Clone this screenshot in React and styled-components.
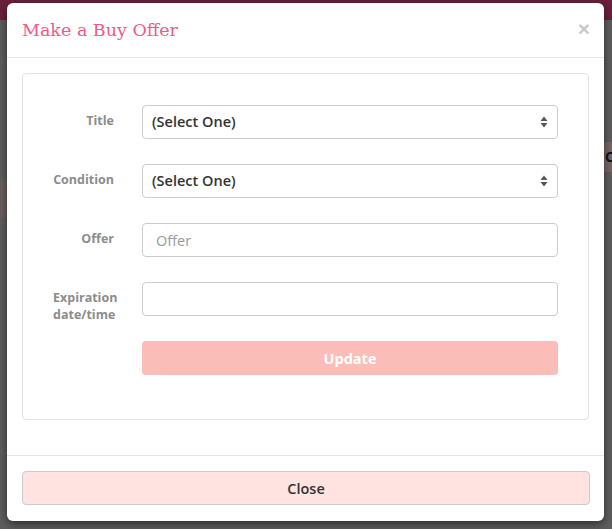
import React from 'react'
import styled, { createGlobalStyle } from 'styled-components'

const GlobalStyle = createGlobalStyle`
  html, body {
    margin: 0;
    padding: 0;
    background: #5d5d5d;
    font-family: 'Open Sans', 'Noto Sans', sans-serif;
  }
  * { box-sizing: border-box; }
`

const Arrows = () => (
  <svg width="8" height="12" viewBox="0 0 8 12">
    <path d="M4 0.5 L7.5 5 L0.5 5 Z" fill="#555" />
    <path d="M4 11.5 L7.5 7 L0.5 7 Z" fill="#555" />
  </svg>
)

const App = () => {
  const i18n = {
    title: 'Make a Buy Offer',
    update: 'Update',
    close: 'Close',
  }
  const fields = [
    { label: 'Title', type: 'select', value: '(Select One)' },
    { label: 'Condition', type: 'select', value: '(Select One)' },
    { label: 'Offer', type: 'input', placeholder: 'Offer' },
    { label: 'Expiration date/time', type: 'input', placeholder: '' },
  ]

  return (
    <Page>
      <GlobalStyle />
      <NavBar>
        <NavItem>▮ Home</NavItem>
        <NavItem>▭ Textbooks</NavItem>
      </NavBar>
      <Band $gap={122} $height={30} $left={590} $color="#776464">Co</Band>
      <Band $gap={8} $height={38} $left={0} $width="20px" $color="#6a5d5b" />

      <Modal>
        <Header>
          <Title>{i18n.title}</Title>
          <CloseX>×</CloseX>
        </Header>
        <Body>
          <Well>
            <Form>
              {fields.map((f) => (
                <React.Fragment key={f.label}>
                  <Label>{f.label}</Label>
                  {f.type === 'select' ? (
                    <SelectBox>
                      <span>{f.value}</span>
                      <Arrows />
                    </SelectBox>
                  ) : (
                    <Input placeholder={f.placeholder} />
                  )}
                </React.Fragment>
              ))}
              <span />
              <UpdateButton>{i18n.update}</UpdateButton>
            </Form>
          </Well>
        </Body>
        <Footer>
          <CloseButton>{i18n.close}</CloseButton>
        </Footer>
      </Modal>
    </Page>
  )
}

const Page = styled.div`
  position: relative;
  width: 612px;
  height: 529px;
  overflow: hidden;
  background: #5d5d5d;
`
const NavBar = styled.div`
  height: 20px;
  background: #6a1f3b;
  display: flex;
  justify-content: flex-end;
  align-items: flex-end;
  gap: 56px;
  padding-right: 42px;
  overflow: hidden;
`
const NavItem = styled.div`
  color: #8f7f86;
  font-size: 18px;
  line-height: 18px;
  margin-bottom: -14px;
`
const Band = styled.div`
  margin-top: ${(p) => p.$gap}px;
  margin-left: ${(p) => p.$left}px;
  width: ${(p) => p.$width || 'auto'};
  height: ${(p) => p.$height}px;
  background: ${(p) => p.$color};
  color: #111;
  font-weight: 700;
  font-size: 14px;
  line-height: ${(p) => p.$height}px;
  padding-left: 15px;
  white-space: nowrap;
  overflow: hidden;
`
const Modal = styled.div`
  position: absolute;
  left: 7px;
  top: 3px;
  width: 597px;
  height: 518px;
  background: #fff;
  border-radius: 6px;
  box-shadow: 0 3px 9px rgba(0, 0, 0, 0.5);
  display: flex;
  flex-direction: column;
`
const Header = styled.div`
  height: 55px;
  border-bottom: 1px solid #e5e5e5;
  display: flex;
  align-items: center;
  justify-content: space-between;
  padding: 0 14px 0 15px;
`
const Title = styled.h4`
  margin: 0;
  font-family: 'DejaVu Serif', 'Liberation Serif', serif;
  font-weight: 400;
  font-size: 17.5px;
  letter-spacing: 0;
  color: #f2588a;
`
const CloseX = styled.span`
  font-family: 'Liberation Sans', sans-serif;
  font-size: 21px;
  font-weight: 700;
  color: #c9c9c9;
  line-height: 1;
  margin-top: -4px;
`
const Body = styled.div`
  padding: 15px 15px 35px;
`
const Well = styled.div`
  height: 347px;
  border: 1px solid #e3e3e3;
  border-radius: 4px;
  padding: 31px 30px 0 30px;
`
const Form = styled.div`
  display: grid;
  grid-template-columns: 61px 1fr;
  grid-auto-rows: 34px;
  column-gap: 28px;
  row-gap: 25px;
  align-items: start;
`
const Label = styled.label`
  text-align: right;
  font-size: 12.5px;
  font-weight: 700;
  line-height: 17px;
  color: #8c8c8c;
  padding-top: 7px;
`
const SelectBox = styled.div`
  height: 34px;
  border: 1px solid #ccc;
  border-radius: 4px;
  display: flex;
  align-items: center;
  justify-content: space-between;
  padding: 0 9px 0 9px;
  font-size: 14.5px;
  font-weight: 600;
  color: #333;
  span { margin-top: -1px; }
`
const Input = styled.input`
  height: 34px;
  width: 100%;
  border: 1px solid #ccc;
  border-radius: 4px;
  padding: 0 13px;
  font-family: inherit;
  font-size: 14.5px;
  color: #333;
  outline: none;
  &::placeholder { color: #999; }
`
const UpdateButton = styled.button`
  height: 34px;
  border: none;
  border-radius: 4px;
  background: #fbbdb7;
  color: #fff;
  font-family: inherit;
  font-size: 14.5px;
  font-weight: 700;
`
const Footer = styled.div`
  border-top: 1px solid #e5e5e5;
  padding: 15px 14px 15px 15px;
`
const CloseButton = styled.button`
  width: 100%;
  height: 34px;
  border: 1px solid #ccc;
  border-radius: 4px;
  background: #fee3e0;
  color: #333;
  font-family: inherit;
  font-size: 14.5px;
  font-weight: 600;
`

export default App
